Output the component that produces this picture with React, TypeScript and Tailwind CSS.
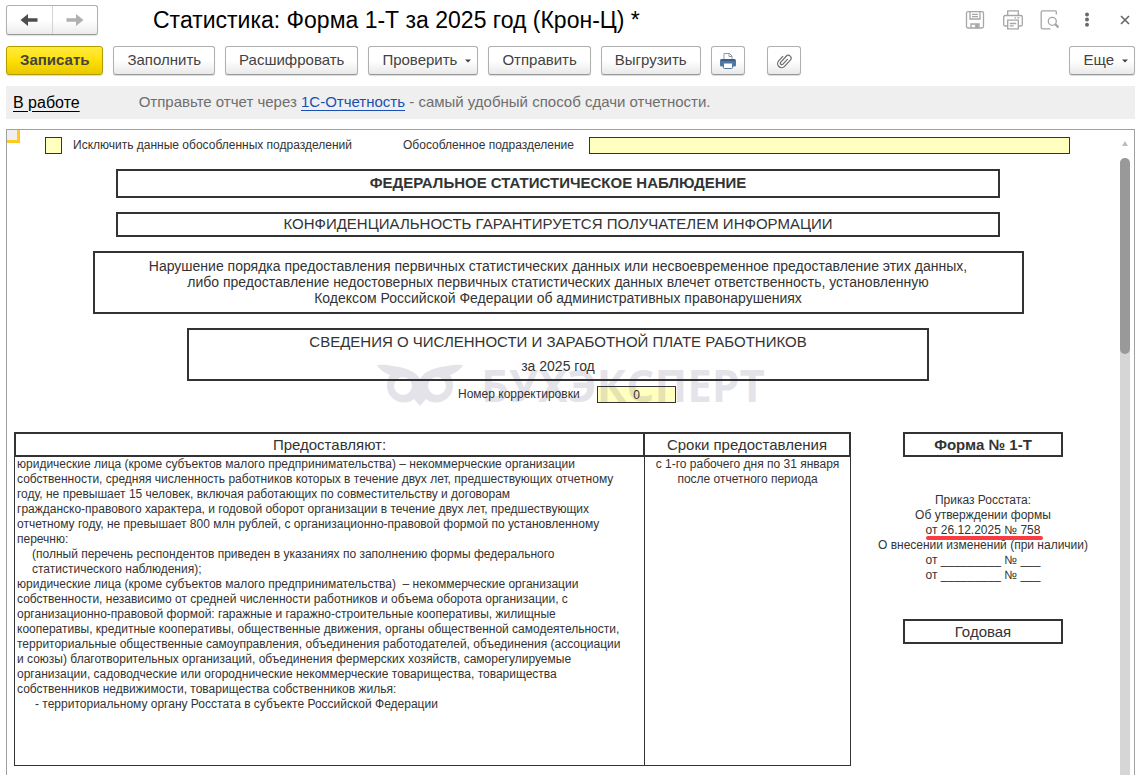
import type { ReactNode } from 'react';

type ToolButtonProps = {
  children: ReactNode;
  label?: string;
  primary?: boolean;
  dropdown?: boolean;
  className?: string;
};

const respondents = [
  'юридические лица (кроме субъектов малого предпринимательства) – некоммерческие организации',
  'собственности, средняя численность работников которых в течение двух лет, предшествующих отчетному',
  'году, не превышает 15 человек, включая работающих по совместительству и договорам',
  'гражданско-правового характера, и годовой оборот организации в течение двух лет, предшествующих',
  'отчетному году, не превышает 800 млн рублей, с организационно-правовой формой по установленному',
  'перечню:',
];

const respondentsNote = [
  '(полный перечень респондентов приведен в указаниях по заполнению формы федерального',
  'статистического наблюдения);',
];

const otherRespondents = [
  'юридические лица (кроме субъектов малого предпринимательства)  – некоммерческие организации',
  'собственности, независимо от средней численности работников и объема оборота организации, с',
  'организационно-правовой формой: гаражные и гаражно-строительные кооперативы, жилищные',
  'кооперативы, кредитные кооперативы, общественные движения, органы общественной самодеятельности,',
  'территориальные общественные самоуправления, объединения работодателей, объединения (ассоциации',
  'и союзы) благотворительных организаций, объединения фермерских хозяйств, саморегулируемые',
  'организации, садоводческие или огороднические некоммерческие товарищества, товарищества',
  'собственников недвижимости, товарищества собственников жилья:',
];

function ToolButton({ children, label, primary, dropdown, className = '' }: ToolButtonProps) {
  const look = primary
    ? 'border-[#b39b00] bg-linear-to-b from-[#ffea38] via-[#ffe000] to-[#e8c800] font-bold text-[#434343]'
    : 'border-[#b0b0b0] border-b-[#989898] bg-linear-to-b from-white from-50% to-[#e9e9e9] text-[#434343]';

  return (
    <button
      type="button"
      aria-label={label}
      className={`flex h-[29px] shrink-0 items-center justify-center whitespace-nowrap rounded-[3px] border text-[15px] shadow-[0_1px_1px_rgba(0,0,0,0.15)] ${look} ${className}`}
    >
      {children}
      {dropdown && (
        <svg className="ml-2" width="6" height="4" viewBox="0 0 6 4" aria-hidden="true">
          <path d="M0 0.5h6L3 3.5z" fill="#434343" />
        </svg>
      )}
    </button>
  );
}

function NavButtons() {
  return (
    <div className="flex h-[30px] w-[92px] shrink-0 rounded-[3px] border border-[#b0b0b0] border-b-[#989898] bg-linear-to-b from-white from-50% to-[#ececec] shadow-[0_1px_1px_rgba(0,0,0,0.12)]">
      <button type="button" aria-label="Назад" className="flex flex-1 items-center justify-center border-r border-[#d4d4d4]">
        <svg width="18" height="14" viewBox="0 0 18 14">
          <path d="M0.5 7L8 1v4.3h9.5v3.4H8V13z" fill="#4d4d4d" />
        </svg>
      </button>
      <button type="button" aria-label="Вперед" className="flex flex-1 items-center justify-center">
        <svg width="18" height="14" viewBox="0 0 18 14">
          <path d="M17.5 7L10 1v4.3H0.5v3.4H10V13z" fill="#b0b0b0" />
        </svg>
      </button>
    </div>
  );
}

function WindowActions() {
  return (
    <div className="ml-auto flex shrink-0 items-center text-[#a6a6a6]">
      <button type="button" aria-label="Сохранить" className="mr-[18px]">
        <svg width="20" height="20" viewBox="0 0 20 20" fill="none" stroke="currentColor" strokeWidth="1.3">
          <rect x="1.5" y="1.7" width="17" height="16.3" rx="1.5" />
          <path d="M5 2v7h10V2M7 4.4h6M7 6.6h6" />
          <path d="M6 18v-4h8v4" />
          <path d="M10.8 14.8h2v2.7h-2z" fill="currentColor" />
        </svg>
      </button>
      <button type="button" aria-label="Печать" className="mr-[17px]">
        <svg width="20" height="20" viewBox="0 0 20 20" fill="none" stroke="currentColor" strokeWidth="1.3">
          <path d="M4.7 5.5V0.8h10.6v4.7" />
          <path d="M4.5 16H2.2Q0.7 16 0.7 14.5V7Q0.7 5.5 2.2 5.5h15.6q1.5 0 1.5 1.5v7.5q0 1.5-1.5 1.5h-2.3" />
          <path d="M4.7 10.2h10.6v8.6H4.7zM6.7 13.5h6.5M6.7 15.8h4M11.5 7.8h1.5M14.3 7.8h2" />
        </svg>
      </button>
      <button type="button" aria-label="Предварительный просмотр" className="mr-[23px]">
        <svg width="20" height="20" viewBox="0 0 20 20" fill="none" stroke="currentColor" strokeWidth="1.3">
          <path d="M16.3 4.5V1.8Q16.3 0.8 15.3 0.8H2.8Q1.2 0.8 1.2 2.4v14.8q0 1.6 1.6 1.6H10.5" />
          <circle cx="12.3" cy="11.3" r="4" />
          <path d="M15.2 14.2l3.3 3.3" strokeWidth="2.4" />
        </svg>
      </button>
      <button type="button" aria-label="Меню" className="mr-[29px] text-[#6a6a6a]">
        <svg width="8" height="16" viewBox="0 0 8 16" fill="currentColor">
          <circle cx="4" cy="2.5" r="2" />
          <circle cx="4" cy="7.6" r="2" />
          <circle cx="4" cy="12.7" r="2" />
        </svg>
      </button>
      <button type="button" aria-label="Закрыть" className="mr-[5px] text-[#6a6a6a]">
        <svg width="10" height="10" viewBox="0 0 10 10" stroke="currentColor" strokeWidth="1.7">
          <path d="M1 1l8 8M9 1L1 9" />
        </svg>
      </button>
    </div>
  );
}

function PrinterIcon() {
  return (
    <svg width="18" height="18" viewBox="0 0 18 18" fill="none">
      <path d="M5 8V1.5h5.5L13 4v4" fill="#fff" stroke="#8c9bab" />
      <path d="M10 1.5V4.5h3" stroke="#8c9bab" />
      <rect x="1" y="7" width="16" height="7.5" rx="1.5" fill="#50759e" />
      <path d="M2 8h14" stroke="#34567d" strokeWidth="1.5" />
      <rect x="4.5" y="11" width="9" height="5.5" rx="1" fill="#fff" stroke="#50759e" />
    </svg>
  );
}

function ClipIcon() {
  return (
    <svg width="18" height="18" viewBox="0 0 18 18" fill="none" stroke="#6b6b6b" strokeWidth="1.2" strokeLinecap="round">
      <path
        d="M5 6.5V12.5a4 4 0 0 0 8 0V4a2.8 2.8 0 0 0-5.6 0V12a1.5 1.5 0 0 0 3 0V5.5"
        transform="rotate(43 9 9)"
      />
    </svg>
  );
}

function Watermark() {
  return (
    <div className="pointer-events-none absolute top-full left-1/2 -mt-[16px] -ml-[181px] flex items-center gap-[18px] text-[#2d2552] opacity-12">
      <svg className="shrink-0" width="86" height="44" viewBox="0 0 86 44" fill="none" aria-hidden="true">
        <path
          d="M0 2Q7 1 16 3C28 5 38 7 43 16C48 7 58 5 70 3Q79 1 86 2Q83 8 73 12Q76 16 76 23C76 38 58 44 49 36L43 43L37 36C28 44 10 38 10 23Q10 16 13 12Q3 8 0 2ZM26 14A9 9 0 1 0 26 32A9 9 0 1 0 26 14ZM60 14A9 9 0 1 0 60 32A9 9 0 1 0 60 14Z"
          fill="currentColor"
          fillRule="evenodd"
        />
      </svg>
      <span className="font-['Open_Sans',sans-serif] text-[44px] leading-[44px] font-bold">БУХЭКСПЕРТ</span>
    </div>
  );
}

function TextLines({ lines }: { lines: string[] }) {
  return (
    <>
      {lines.map((line) => (
        <span key={line} className="block whitespace-pre">
          {line}
        </span>
      ))}
    </>
  );
}

function FormTable() {
  return (
    <table className="flex-1 table-fixed border-separate border-spacing-0 text-[#333]">
      <thead>
        <tr className="h-[25px] text-[15px] leading-5">
          <th className="border-2 border-[#333] p-0 font-normal">Предоставляют:</th>
          <th className="w-[206px] border-2 border-l-0 border-[#333] p-0 font-normal">Сроки предоставления</th>
        </tr>
      </thead>
      <tbody>
        <tr className="h-[309px] align-top">
          <td className="border border-t-0 border-[#333] p-0 pl-[2px]">
            <TextLines lines={respondents} />
            <div className="pl-[15px]">
              <TextLines lines={respondentsNote} />
            </div>
            <TextLines lines={otherRespondents} />
            <div className="pl-[18px]">- территориальному органу Росстата в субъекте Российской Федерации</div>
          </td>
          <td className="border-r border-b border-[#333] p-0 text-center">
            с 1-го рабочего дня по 31 января
            <br />
            после отчетного периода
          </td>
        </tr>
      </tbody>
    </table>
  );
}

function OrderInfo() {
  return (
    <aside className="mr-[11px] flex w-[216px] shrink-0 flex-col items-center text-center">
      <div className="flex h-[25px] w-[160px] items-center justify-center border-2 border-[#333] text-[15px] font-bold">
        Форма № 1-Т
      </div>
      <div className="mt-[36px] whitespace-nowrap">
        <p>Приказ Росстата:</p>
        <p>Об утверждении формы</p>
        <p>
          <span className="relative">
            от 26.12.2025 № 758
            <span className="absolute -right-[3px] -bottom-[3px] left-0 h-[4px] rounded-full bg-[#fb3b3f]" />
          </span>
        </p>
        <p>О внесении изменений (при наличии)</p>
        <p>от _________ № ___</p>
        <p>от _________ № ___</p>
      </div>
      <div className="mt-[36px] flex h-[25px] w-[160px] items-center justify-center border-2 border-[#333] text-[15px]">
        Годовая
      </div>
    </aside>
  );
}

export default function App() {
  return (
    <div className="flex h-screen flex-col overflow-hidden bg-white pl-[6px] pr-[12px] font-['Liberation_Sans',Arial,sans-serif] text-[#333]">
      <header className="flex h-[40px] shrink-0 items-center">
        <NavButtons />
        <h1 className="ml-[55px] text-[23px] leading-7 whitespace-nowrap text-black">
          Статистика: Форма 1-Т за 2025 год (Крон-Ц) *
        </h1>
        <WindowActions />
      </header>

      <div className="mt-[6px] flex shrink-0 gap-[10px]">
        <ToolButton primary className="px-[13px]">Записать</ToolButton>
        <ToolButton className="px-[13px]">Заполнить</ToolButton>
        <ToolButton className="px-[13px]">Расшифровать</ToolButton>
        <ToolButton dropdown className="pr-[6px] pl-[13px]">Проверить</ToolButton>
        <ToolButton className="px-[13px]">Отправить</ToolButton>
        <ToolButton className="px-[13px]">Выгрузить</ToolButton>
        <ToolButton label="Печать" className="w-[34px]">
          <PrinterIcon />
        </ToolButton>
        <ToolButton label="Прикрепить файл" className="ml-[12px] w-[34px]">
          <ClipIcon />
        </ToolButton>
        <ToolButton dropdown className="ml-auto pr-[6px] pl-[13px]">Еще</ToolButton>
      </div>

      <div className="mt-[11px] flex h-[33px] shrink-0 items-center bg-[#efefef] pl-[7px]">
        <a href="#status" className="text-[16px] text-black underline underline-offset-3">
          В работе
        </a>
        <p className="ml-[59px] text-[15px] text-[#6e6e6e]">
          Отправьте отчет через{' '}
          <a href="#reporting" className="text-[#1a4fb4] underline underline-offset-3">
            1С-Отчетность
          </a>{' '}
          - самый удобный способ сдачи отчетности.
        </p>
      </div>

      <main className="relative mt-[10px] flex min-h-0 flex-1 overflow-hidden border border-b-0 border-[#a0a0a0]">
        <div className="absolute top-0 left-0 size-[13px] border-r-3 border-b-3 border-[#ffc91f] bg-[#efefef]" />

        <div className="min-w-0 flex-1 pt-[7px] pr-[18px] pl-[7px] text-[12px] leading-[15px]">
          <div className="flex h-[17px] items-center pr-[32px] pl-[31px]">
            <input
              id="exclude"
              type="checkbox"
              className="size-[17px] shrink-0 appearance-none border border-[#333] bg-[#ffffbf]"
            />
            <label htmlFor="exclude" className="ml-[11px] w-[330px] shrink-0">
              Исключить данные обособленных подразделений
            </label>
            <label htmlFor="division" className="w-[186px] shrink-0">
              Обособленное подразделение
            </label>
            <input id="division" type="text" className="h-[17px] min-w-0 flex-1 border border-[#333] bg-[#ffffbf] px-1" />
          </div>

          <h2 className="mx-auto mt-[15px] flex h-[29px] max-w-[884px] items-center justify-center border-2 border-[#333] pb-[2px] text-[15px] font-bold">
            ФЕДЕРАЛЬНОЕ СТАТИСТИЧЕСКОЕ НАБЛЮДЕНИЕ
          </h2>
          <p className="mx-auto mt-[14px] flex h-[25px] max-w-[884px] items-center justify-center border-2 border-[#333] pb-[2px] text-[15px]">
            КОНФИДЕНЦИАЛЬНОСТЬ ГАРАНТИРУЕТСЯ ПОЛУЧАТЕЛЕМ ИНФОРМАЦИИ
          </p>
          <p className="mx-auto mt-[14px] flex h-[63px] max-w-[931px] flex-col justify-center border-2 border-[#333] pb-[2px] text-center text-[14px] leading-4">
            Нарушение порядка предоставления первичных статистических данных или несвоевременное предоставление этих данных,
            <br />
            либо предоставление недостоверных первичных статистических данных влечет ответственность, установленную
            <br />
            Кодексом Российской Федерации об административных правонарушениях
          </p>
          <div className="relative mx-auto mt-[14px] h-[53px] max-w-[742px] border-2 border-[#333] text-center">
            <h3 className="text-[15px] leading-6">СВЕДЕНИЯ О ЧИСЛЕННОСТИ И ЗАРАБОТНОЙ ПЛАТЕ РАБОТНИКОВ</h3>
            <p className="text-[14px] leading-6">за 2025 год</p>
            <Watermark />
          </div>

          <div className="mt-[5px] flex h-[17px] items-center justify-center pl-[18px]">
            <label htmlFor="correction" className="w-[139px]">
              Номер корректировки
            </label>
            <input
              id="correction"
              type="text"
              defaultValue="0"
              className="h-[17px] w-[79px] border border-[#333] bg-[#ffffbf] text-center"
            />
          </div>

          <div className="mt-[29px] flex items-start gap-[24px]">
            <FormTable />
            <OrderInfo />
          </div>
        </div>

        <div className="flex w-[14px] shrink-0 flex-col pr-[4px]" aria-hidden="true">
          <svg className="mx-auto my-[10px] shrink-0" width="6" height="8" viewBox="0 0 6 8">
            <path d="M3 1L6 6H0z" fill="#bdbdbd" />
          </svg>
          <div className="flex-1 rounded-t-full bg-[#d6d6d6]">
            <div className="h-[196px] rounded-full bg-[#999]" />
          </div>
        </div>
      </main>
    </div>
  );
}
